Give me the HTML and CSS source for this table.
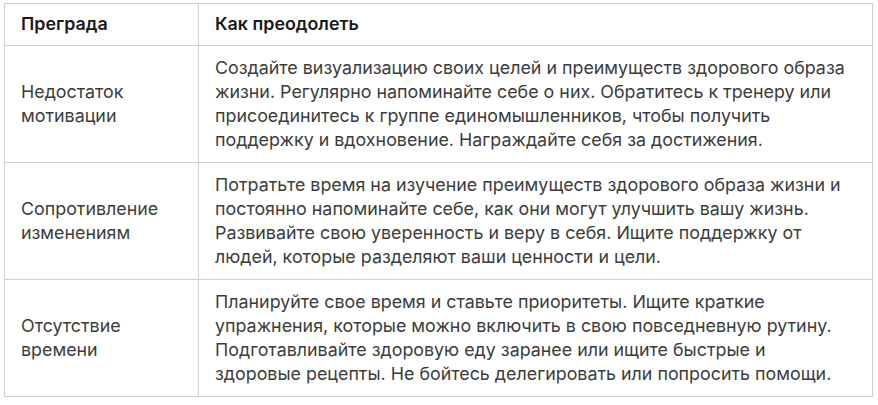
FILE: index.html
```html
<!DOCTYPE html>
<html lang="ru">
<head>
<meta charset="utf-8">
<link rel="stylesheet" href="styles.css">
</head>
<body>
<table class="tbl">
  <thead>
    <tr>
      <th class="c1">Преграда</th>
      <th class="c2">Как преодолеть</th>
    </tr>
  </thead>
  <tbody>
    <tr>
      <td class="c1">Недостаток мотивации</td>
      <td class="c2">Создайте визуализацию своих целей и преимуществ здорового образа жизни. Регулярно напоминайте себе о них. Обратитесь к тренеру или присоединитесь к группе единомышленников, чтобы получить поддержку и вдохновение. Награждайте себя за достижения.</td>
    </tr>
    <tr>
      <td class="c1">Сопротивление изменениям</td>
      <td class="c2">Потратьте время на изучение преимуществ здорового образа жизни и постоянно напоминайте себе, как они могут улучшить вашу жизнь. Развивайте свою уверенность и веру в себя. Ищите поддержку от людей, которые разделяют ваши ценности и цели.</td>
    </tr>
    <tr>
      <td class="c1">Отсутствие времени</td>
      <td class="c2">Планируйте свое время и ставьте приоритеты. Ищите краткие упражнения, которые можно включить в свою повседневную рутину. Подготавливайте здоровую еду заранее или ищите быстрые и здоровые рецепты. Не бойтесь делегировать или попросить помощи.</td>
    </tr>
  </tbody>
</table>
</body>
</html>
```

FILE: styles.css
```css
body {
  margin: 3px 0 0 4px;
  background: #fff;
  font-family: Inter, "Noto Sans", sans-serif;
}
.tbl {
  border-collapse: collapse;
  width: 869px;
  font-size: 17.85px;
  line-height: 24px;
}
.tbl th, .tbl td {
  border: 1px solid #d0d0d0;
  text-align: left;
  vertical-align: middle;
}
.tbl th {
  font-weight: 600;
  color: #1a1a1a;
  padding: 8px 16px 9px;
}
.tbl td {
  color: #3c3c3c;
  padding: 10px 16px;
}
.c1 {
  width: 161px;
}
```
